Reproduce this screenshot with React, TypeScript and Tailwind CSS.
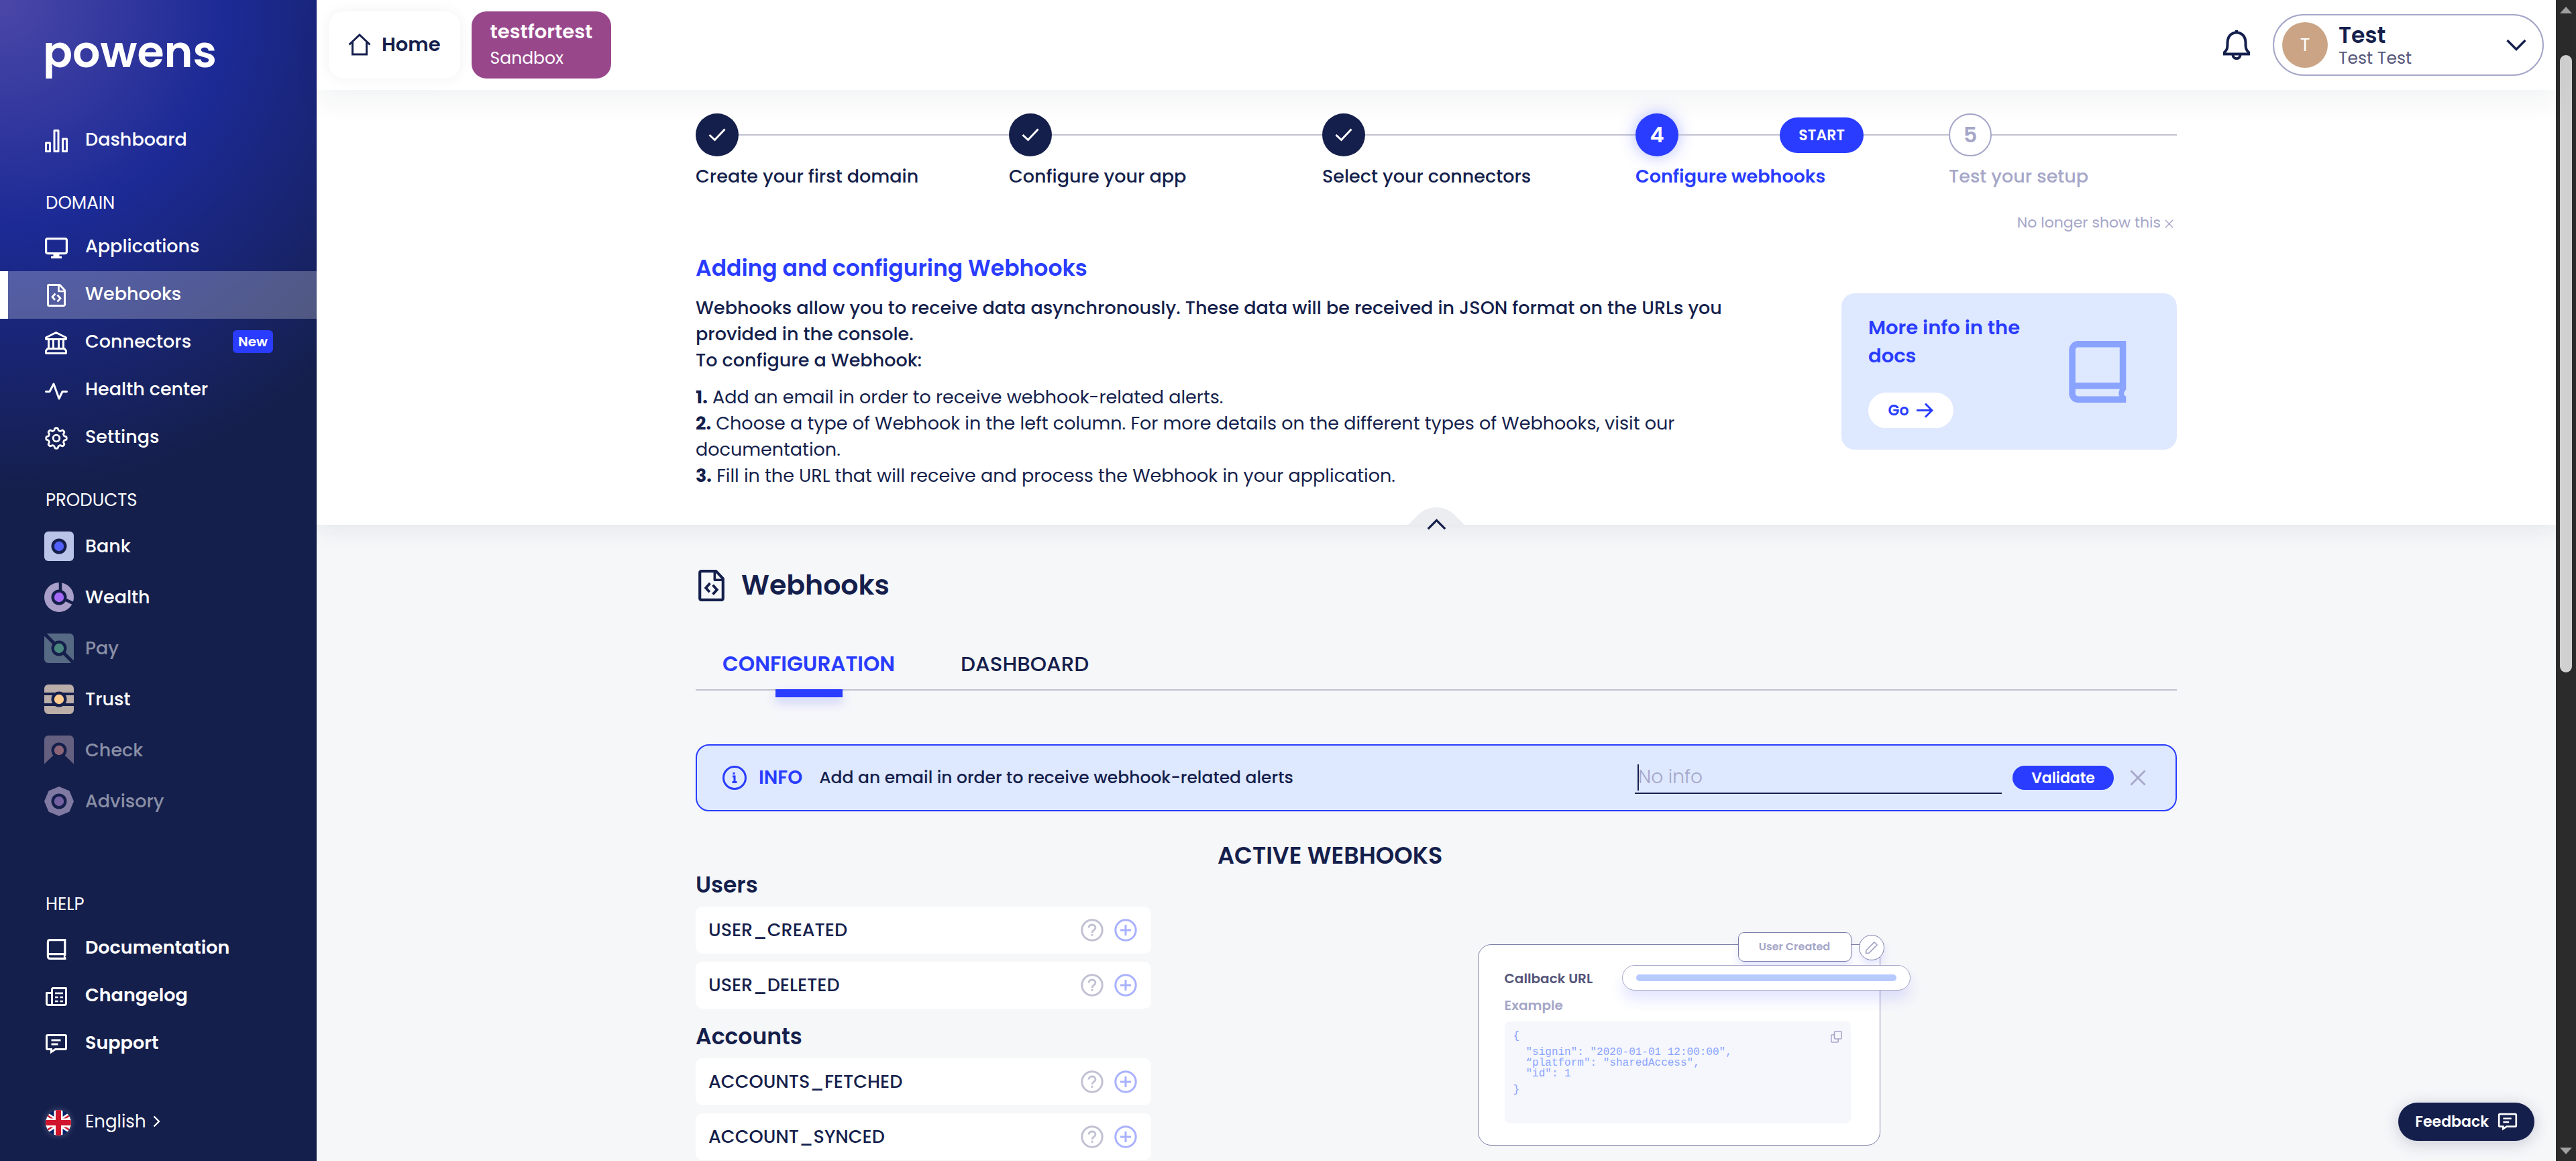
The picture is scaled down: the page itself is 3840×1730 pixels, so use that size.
import type { ReactNode } from "react";

type IconProps = { className?: string };

/* ---------- icons ---------- */

const DashboardIcon = () => (
  <svg width="34" height="34" viewBox="0 0 34 34" fill="none" stroke="currentColor" strokeWidth="3" strokeLinejoin="round">
    <rect x="1.5" y="20" width="6" height="12.5" />
    <rect x="14" y="1.5" width="6" height="31" />
    <rect x="26.5" y="14" width="6" height="18.5" />
  </svg>
);

const MonitorIcon = () => (
  <svg width="34" height="34" viewBox="0 0 34 34" fill="none" stroke="currentColor" strokeWidth="3.2">
    <rect x="1.6" y="3.6" width="30.8" height="22" rx="2.5" />
    <path d="M17 25.6v5" strokeWidth="9" />
    <path d="M9 31.5h16" />
  </svg>
);

const FileCodeIcon = ({ className = "w-[34px] h-[34px]" }: IconProps) => (
  <svg className={className} viewBox="0 0 34 34" fill="none" stroke="currentColor" strokeWidth="3" strokeLinejoin="round">
    <path d="M6 1.5H22L29.5 9.5V31a1.5 1.5 0 0 1-1.500 1.5H6A1.5 1.5 0 0 1 4.5 31V3A1.5 1.5 0 0 1 6 1.5Z" />
    <path d="M20.5 2v9h9" strokeWidth="2.6" />
    <path d="M15.5 14.5l-4.500 5 4 4.500M18.5 16.5l4.500 5-4.500 5" strokeWidth="2.8" strokeLinejoin="miter" />
  </svg>
);

const BankIcon = () => (
  <svg width="34" height="34" viewBox="0 0 34 34" fill="none" stroke="currentColor" strokeWidth="2.8" strokeLinejoin="round">
    <path d="M1.5 9 16.5 1.5 31.5 9v2.500h-30Z" />
    <path d="M5.5 11.5v13.500M12.5 11.5v13.500M20.5 11.5v13.500M27.5 11.5v13.500" strokeWidth="3" />
    <path d="M4 25.5h25l2.500 3v4h-30v-4Z" />
  </svg>
);

const PulseIcon = () => (
  <svg width="34" height="34" viewBox="0 0 34 34" fill="none" stroke="currentColor" strokeWidth="3" strokeLinejoin="round" strokeLinecap="round">
    <path d="M1.5 18.5H7l6-11.500 8 22 5-10.500h6.500" />
  </svg>
);

const gearOutline = (() => {
  const points: string[] = [];
  for (let i = 0; i < 144; i++) {
    const a = (i / 144) * Math.PI * 2;
    const r = 13.6 + 1.7 * Math.tanh(2.2 * Math.cos(8 * a));
    points.push(`${(17 + r * Math.cos(a)).toFixed(2)} ${(17 + r * Math.sin(a)).toFixed(2)}`);
  }
  return `M${points.join("L")}Z`;
})();

const GearIcon = () => (
  <svg width="34" height="34" viewBox="0 0 34 34" fill="none" stroke="currentColor" strokeWidth="2.8" strokeLinejoin="round">
    <path d={gearOutline} />
    <circle cx="17" cy="17" r="4.8" />
  </svg>
);

const BookIcon = ({ className = "w-[34px] h-[34px]" }: IconProps) => (
  <svg className={className} viewBox="0 0 34 34" fill="none" stroke="currentColor" strokeWidth="3.2">
    <path d="M31 3.6H7A3 3 0 0 0 4.4 6.5V28a3 3 0 0 0 3 3.400H31.4" />
    <path d="M29.8 2V26.5M4.4 24.6H31.4" />
    <path d="M30.5 25.5c-2 1.8-2 4 0 5.500" strokeWidth="2.6" />
  </svg>
);

const NewsIcon = () => (
  <svg width="34" height="34" viewBox="0 0 34 34" fill="none" stroke="currentColor" strokeWidth="3" strokeLinejoin="round">
    <path d="M10.5 4.5H31.5V27a2.5 2.5 0 0 1-2.500 2.500H5A2.5 2.5 0 0 1 2.5 27V11.5h8" />
    <path d="M10.5 4.5v24" />
    <path d="M15 12h12M15 18h4.500M22.5 18h4.500M15 24h4.500M22.5 24h4.500" strokeWidth="2.6" />
  </svg>
);

const ChatIcon = ({ className = "w-[34px] h-[34px]" }: IconProps) => (
  <svg className={className} viewBox="0 0 34 34" fill="none" stroke="currentColor" strokeWidth="3">
    <path d="M4 3.5H30a1.5 1.5 0 0 1 1.500 1.500V23a1.5 1.5 0 0 1-1.500 1.500H15.5L9.5 28.5v-4H4A1.5 1.5 0 0 1 2.5 23V5A1.5 1.5 0 0 1 4 3.5Z" />
    <path d="M9.5 11h14M9.5 17h10" strokeWidth="2.8" />
  </svg>
);

const HomeIcon = () => (
  <svg width="34" height="34" viewBox="0 0 34 34" fill="none" stroke="currentColor" strokeWidth="3">
    <path d="M1.5 16.5 17 2l15.500 14.500" />
    <path d="M6.5 12.5v18.500h21V12.5" />
  </svg>
);

const BellIcon = () => (
  <svg width="40" height="46" viewBox="0 0 40 46" fill="none" stroke="currentColor" strokeWidth="4">
    <path d="M2 36.5H38V34C34 30 33.5 28 33.5 20 33.5 10.5 28 4.5 20 4.5S6.5 10.5 6.5 20C6.5 28 6 30 2 34Z" />
    <path d="M20 1v4" />
    <path d="M14.5 37.5c0 7.500 11 7.500 11 0" />
  </svg>
);

const Chevron = ({ className = "", up = false }: IconProps & { up?: boolean }) => (
  <svg className={className} viewBox="0 0 30 18" fill="none" stroke="currentColor" strokeWidth="3.4">
    <path d={up ? "M1.5 16 15 2.5 28.5 16" : "M1.5 2 15 15.5 28.5 2"} />
  </svg>
);

const CrossIcon = ({ className = "" }: IconProps) => (
  <svg className={className} viewBox="0 0 24 24" fill="none" stroke="currentColor" strokeWidth="2.6">
    <path d="M1.5 1.5 22.5 22.5M22.5 1.5 1.5 22.5" />
  </svg>
);

const FlagIcon = () => (
  <svg width="38" height="38" viewBox="0 0 38 38" className="rounded-full shadow-[0_0_10px_rgba(255,255,255,0.25)]">
    <rect width="38" height="38" fill="#012169" />
    <path d="M-10 0 48 38M48 0-10 38" stroke="#fff" strokeWidth="8" />
    <path d="M-10 0 48 38M48 0-10 38" stroke="#d0142c" strokeWidth="2.5" />
    <path d="M19 0v38M0 19h38" stroke="#fff" strokeWidth="13" />
    <path d="M19 0v38M0 19h38" stroke="#d0142c" strokeWidth="8" />
  </svg>
);

const NAVY = "#151f4c";

const Core = ({ color }: { color: string }) => (
  <>
    <circle cx="22" cy="22" r="11.5" fill={NAVY} />
    <circle cx="22" cy="22" r="7.2" fill={color} />
  </>
);

const productShapes: Record<string, ReactNode> = {
  Bank: (
    <>
      <rect width="44" height="44" rx="6" fill="#bac4e8" />
      <Core color="#5260ff" />
    </>
  ),
  Wealth: (
    <>
      <circle cx="22" cy="22" r="22" fill="#a99fc9" />
      <path d="M24 0v22L46 32.5" stroke={NAVY} strokeWidth="4.5" fill="none" />
      <Core color="#a468f6" />
    </>
  ),
  Pay: (
    <>
      <rect width="44" height="44" rx="6" fill="#566a84" />
      <path d="M0 0 44 44" stroke={NAVY} strokeWidth="5" />
      <Core color="#4a877e" />
    </>
  ),
  Trust: (
    <>
      <rect width="44" height="44" rx="6" fill="#bbada8" />
      <path d="M0 14h44M0 30h44" stroke={NAVY} strokeWidth="4" />
      <Core color="#ffcb8f" />
    </>
  ),
  Check: (
    <>
      <path d="M6 0H38a6 6 0 0 1 6 6V42.5L30.5 29.5h-17L0 42.5V6A6 6 0 0 1 6 0Z" fill="#65607f" />
      <Core color="#8b6577" />
    </>
  ),
  Advisory: (
    <>
      <path d="M22 0 37.5 6.5 44 22 37.5 37.5 22 44 6.5 37.5 0 22 6.5 6.5Z" fill="#807aa3" />
      <Core color="#7561a2" />
    </>
  ),
};

/* ---------- sidebar ---------- */

const domainItems = [
  { label: "Applications", icon: <MonitorIcon /> },
  { label: "Webhooks", icon: <FileCodeIcon />, active: true },
  { label: "Connectors", icon: <BankIcon />, badge: "New" },
  { label: "Health center", icon: <PulseIcon /> },
  { label: "Settings", icon: <GearIcon /> },
];

const productItems = [
  { label: "Bank" },
  { label: "Wealth" },
  { label: "Pay", disabled: true },
  { label: "Trust" },
  { label: "Check", disabled: true },
  { label: "Advisory", disabled: true },
];

const helpItems = [
  { label: "Documentation", icon: <BookIcon /> },
  { label: "Changelog", icon: <NewsIcon /> },
  { label: "Support", icon: <ChatIcon /> },
];

type NavItemProps = { label: string; icon: ReactNode; active?: boolean; badge?: string; bold?: boolean };

const NavItem = ({ label, icon, active, badge, bold }: NavItemProps) => (
  <li>
    <a
      href="#"
      aria-current={active ? "page" : undefined}
      className={`flex h-[71px] items-center pb-[3px] text-[27px] leading-10 ${bold ? "font-semibold" : "font-medium"} ${
        active ? "border-l-[12px] border-white bg-white/25 bg-clip-padding pl-[55px]" : "pl-[67px]"
      }`}
    >
      <span className="w-[60px] pt-1">{icon}</span>
      {label}
      {badge && (
        <span className="mr-[65px] ml-auto rounded-md bg-[#293cff] px-2 text-[20px] leading-[34px] font-semibold">{badge}</span>
      )}
    </a>
  </li>
);

const NavHeading = ({ children, className = "" }: { children: ReactNode; className?: string }) => (
  <h2 className={`pl-[68px] text-[26px] leading-[62px] font-normal ${className}`}>{children}</h2>
);

const Sidebar = () => (
  <aside className="flex w-[472px] shrink-0 flex-col bg-[#151f4c] bg-[radial-gradient(circle_at_0_0,#4b47a8_0,#1c2a95_340px,#151f4c_730px)] text-white">
    <a href="#" aria-label="powens" className="mb-[46px] pt-[28px] pl-[64px] text-[65px] leading-[100px] font-semibold">
      powens
    </a>
    <nav>
      <ul>
        <NavItem label="Dashboard" icon={<DashboardIcon />} />
      </ul>
      <NavHeading className="mt-[26px]">DOMAIN</NavHeading>
      <ul>
        {domainItems.map((item) => (
          <NavItem key={item.label} {...item} />
        ))}
      </ul>
      <NavHeading className="mt-[26px]">PRODUCTS</NavHeading>
      <ul>
        {productItems.map(({ label, disabled }) => (
          <li key={label}>
            <a
              href="#"
              aria-disabled={disabled}
              className={`flex h-[76px] items-center gap-[17px] pl-[66px] text-[27px] leading-10 font-medium ${
                disabled ? "text-[#8a8fa6]" : ""
              }`}
            >
              <svg width="44" height="44" viewBox="0 0 44 44">
                {productShapes[label]}
              </svg>
              {label}
            </a>
          </li>
        ))}
      </ul>
      <NavHeading className="mt-[84px]">HELP</NavHeading>
      <ul>
        {helpItems.map((item) => (
          <NavItem key={item.label} {...item} bold />
        ))}
      </ul>
    </nav>
    <button type="button" className="mt-[44px] flex h-[71px] shrink-0 items-center pl-[68px] text-[26px] leading-10">
      <span className="w-[59px] pt-1">
        <FlagIcon />
      </span>
      English
      <svg className="ml-[10px]" width="11" height="18" viewBox="0 0 11 18" fill="none" stroke="currentColor" strokeWidth="2.4">
        <path d="M1.5 1.5 9 9l-7.500 7.500" />
      </svg>
    </button>
  </aside>
);

/* ---------- top bar ---------- */

const TopBar = () => (
  <header className="relative z-10 flex h-[134px] shrink-0 items-center bg-white px-[18px] shadow-[0_20px_36px_rgba(20,31,60,0.05)]">
    <a
      href="#"
      className="flex h-[100px] items-center gap-[16px] rounded-[22px] bg-white px-[29px] text-[29px] font-semibold shadow-[0_0_20px_rgba(20,31,76,0.06)]"
    >
      <HomeIcon />
      Home
    </a>
    <a href="#" className="ml-[17px] flex h-[100px] flex-col justify-center rounded-[22px] bg-[#98478b] px-[28px] text-white">
      <span className="text-[29px] leading-[39px] font-semibold">testfortest</span>
      <span className="text-[25px] leading-[39px]">Sandbox</span>
    </a>
    <button type="button" aria-label="Notifications" className="ml-auto">
      <BellIcon />
    </button>
    <button
      type="button"
      className="ml-[34px] flex h-[92px] w-[404px] items-center rounded-full border-2 border-[#a5a6c8] pr-[24px] pl-[12px] text-left"
    >
      <span className="flex size-[68px] items-center justify-center rounded-full bg-[#caa485] text-[27px] text-white">T</span>
      <span className="ml-[16px] flex flex-col">
        <span className="text-[33px] leading-10 font-semibold">Test</span>
        <span className="text-[25px] leading-[28px] text-[#55557a]">Test Test</span>
      </span>
      <Chevron className="ml-auto h-[18px] w-[30px]" />
    </button>
  </header>
);

/* ---------- onboarding ---------- */

const steps = [
  { label: "Create your first domain", state: "done" },
  { label: "Configure your app", state: "done" },
  { label: "Select your connectors", state: "done" },
  { label: "Configure webhooks", state: "current" },
  { label: "Test your setup", state: "todo" },
];

const circleStyles: Record<string, string> = {
  done: "bg-[#151f4c] text-white",
  current: "bg-[#293cff] text-white shadow-[0_0_24px_rgba(41,60,255,0.35)]",
  todo: "border-2 border-[#a5a6c8] bg-white text-[#a5a6c8]",
};

const labelStyles: Record<string, string> = {
  done: "font-medium",
  current: "font-semibold text-[#293cff]",
  todo: "font-medium text-[#a5a6c8]",
};

const Stepper = () => (
  <ol className="grid grid-cols-[467fr_467fr_467fr_467fr_340fr]">
    {steps.map(({ label, state }, i) => (
      <li key={label}>
        <div className="flex items-center">
          <span className={`flex size-16 items-center justify-center rounded-full text-[32px] font-semibold ${circleStyles[state]}`}>
            {state === "done" ? (
              <svg width="26" height="20" viewBox="0 0 26 20" fill="none" stroke="currentColor" strokeWidth="3">
                <path d="M1.5 10 9.5 17.5 24.5 1.5" />
              </svg>
            ) : (
              i + 1
            )}
          </span>
          <span className="h-[2px] flex-1 bg-[#c1c1d3]" />
          {state === "current" && (
            <>
              <button type="button" className="h-[53px] rounded-full bg-[#293cff] px-[28px] text-[22px] font-semibold text-white">
                START
              </button>
              <span className="h-[2px] w-[127px] bg-[#c1c1d3]" />
            </>
          )}
        </div>
        <p className={`mt-[10px] text-[27px] leading-10 ${labelStyles[state]}`}>{label}</p>
      </li>
    ))}
  </ol>
);

const Onboarding = () => (
  <section className="relative bg-white pt-[35px] pb-[54px] shadow-[0_4px_36px_rgba(20,31,60,0.09)]">
    <div className="mx-auto max-w-[2208px]">
      <Stepper />
      <div className="mt-[34px] flex justify-end pr-[5px] text-[#a5a6c8]">
        <button type="button" className="flex items-center gap-[6px] text-[22px] leading-[30px]">
          No longer show this
          <CrossIcon className="mt-[2px] size-[13px]" />
        </button>
      </div>
      <div className="mt-[29px] flex items-start justify-between">
        <div className="max-w-[1600px]">
          <h2 className="text-[33px] leading-[48px] font-semibold text-[#293cff]">Adding and configuring Webhooks</h2>
          <p className="mt-[15px] text-[27px] leading-[39px] font-medium">
            Webhooks allow you to receive data asynchronously. These data will be received in JSON format on the URLs you
            provided in the console.
            <br />
            To configure a Webhook:
          </p>
          <div className="mt-[16px] text-[27px] leading-[39px]">
            <p>
              <b className="font-bold">1.</b> Add an email in order to receive webhook-related alerts.
            </p>
            <p>
              <b className="font-bold">2.</b> Choose a type of Webhook in the left column. For more details on the different types of
              Webhooks, visit our documentation.
            </p>
            <p>
              <b className="font-bold">3.</b> Fill in the URL that will receive and process the Webhook in your application.
            </p>
          </div>
        </div>
        <div className="mt-[61px] flex w-[500px] items-center justify-between rounded-[20px] bg-[#dee8ff] pt-[30px] pr-[68px] pb-[32px] pl-[40px] text-[#293cff]">
          <div className="w-[250px]">
            <h3 className="text-[29px] leading-[42px] font-semibold">More info in the docs</h3>
            <a
              href="#"
              className="mt-[34px] flex h-[53px] w-[127px] items-center justify-center gap-[12px] rounded-full bg-white text-[22px] font-semibold"
            >
              Go
              <svg width="25" height="23" viewBox="0 0 25 23" fill="none" stroke="currentColor" strokeWidth="3">
                <path d="M0 11.5H23M13 1.5 23 11.5 13 21.5" />
              </svg>
            </a>
          </div>
          <BookIcon className="size-[101px] text-[#8aa3ff]" />
        </div>
      </div>
    </div>
    <button
      type="button"
      aria-label="Collapse"
      className="absolute -bottom-[8px] left-1/2 flex h-[34px] w-[84px] -translate-x-1/2 items-end justify-center"
    >
      <svg className="absolute top-0 left-0" width="84" height="26" viewBox="0 0 84 26" fill="#ecedf1">
        <path d="M0 26 12 14Q25 0 42 0T72 14L84 26Z" />
      </svg>
      <Chevron up className="relative h-[17px] w-[29px]" />
    </button>
  </section>
);

/* ---------- webhooks ---------- */

const groups = [
  { title: "Users", hooks: ["USER_CREATED", "USER_DELETED"] },
  { title: "Accounts", hooks: ["ACCOUNTS_FETCHED", "ACCOUNT_SYNCED"] },
];

const HookRow = ({ name }: { name: string }) => (
  <li className="flex h-[70px] items-center rounded-[10px] bg-white pr-[21px] pl-[19px]">
    <span className="flex-1 text-[27px] leading-10 font-medium">{name}</span>
    <button type="button" aria-label={`About ${name}`} className="text-[#c1c1d3]">
      <svg width="34" height="34" viewBox="0 0 34 34" fill="none" stroke="currentColor" strokeWidth="3">
        <circle cx="17" cy="17" r="15.2" />
        <path d="M12 13.5c0-6 10-6 10 0 0 3.500-5 3.500-5 7.500" strokeWidth="2.8" />
        <path d="M17 22.8v3" strokeWidth="2.8" />
      </svg>
    </button>
    <button type="button" aria-label={`Add ${name}`} className="ml-[16px] text-[#a9b1ff]">
      <svg width="34" height="34" viewBox="0 0 34 34" fill="none" stroke="currentColor" strokeWidth="3">
        <circle cx="17" cy="17" r="15.2" />
        <path d="M17 9v16M9 17h16" />
      </svg>
    </button>
  </li>
);

const Preview = () => (
  <div className="relative h-[318px] w-[655px] pt-[18px]">
    <div className="flex h-[300px] w-[600px] flex-col rounded-[20px] border border-[#7d7fa8] bg-white pt-[35px] pr-[43px] pl-[39px]">
      <p className="text-[20px] leading-[30px] font-semibold text-[#55557a]">Callback URL</p>
      <p className="mt-[10px] text-[20px] leading-[30px] font-semibold text-[#a5a6c8]">Example</p>
      <div className="mt-[9px] flex h-[152px] justify-between rounded-[8px] bg-[#f5f7fd] px-[13px] pt-[14px]">
        <pre className="font-['Liberation_Mono',monospace] text-[16px] leading-[16px] text-[#8aa3ff]">
          <span className="block">{"{"}</span>
          <span className="mt-[8px] mb-[8px] ml-[19px] block">{'"signin": "2020-01-01 12:00:00",\n“platform": "sharedAccess",\n"id": 1'}</span>
          <span className="block">{"}"}</span>
        </pre>
        <svg width="17" height="18" viewBox="0 0 17 18" fill="none" stroke="#a5a6c8" strokeWidth="1.6">
          <rect x="5.5" y="1" width="10.5" height="11" rx="1" />
          <path d="M5.5 6H1.8a1 1 0 0 0-1 1v9a1 1 0 0 0 1 1h8.400a1 1 0 0 0 1-1v-4" />
        </svg>
      </div>
    </div>
    <span className="absolute top-0 right-[98px] flex h-[44px] w-[169px] items-center justify-center rounded-[9px] border border-[#7d7fa8] bg-white text-[16px] font-semibold text-[#a5a6c8] shadow-[0_8px_12px_rgba(41,60,255,0.12)]">
      User Created
    </span>
    <span className="absolute top-[4px] right-[49px] flex size-[38px] items-center justify-center rounded-full border border-[#7d7fa8] bg-white shadow-[0_8px_12px_rgba(41,60,255,0.12)]">
      <svg width="20" height="20" viewBox="0 0 20 20" fill="none" stroke="#a5a6c8" strokeWidth="1.7" strokeLinejoin="round">
        <path d="M1.5 18.5 2 14 14 1.8 18.2 6 6 18.2Z" />
      </svg>
    </span>
    <span className="absolute top-[49px] right-[10px] flex h-[38px] w-[430px] items-center rounded-full border border-[#a5a6c8] bg-white px-[20px] shadow-[0_14px_20px_rgba(41,60,255,0.12)]">
      <span className="h-[10px] flex-1 rounded-full bg-[#b7caff]" />
    </span>
  </div>
);

const Webhooks = () => (
  <section className="mx-auto w-full max-w-[2208px] pt-[60px]">
    <h1 className="flex h-[60px] items-center text-[41px] font-semibold">
      <FileCodeIcon className="mr-[21px] size-[47px]" />
      Webhooks
    </h1>
    <div role="tablist" className="mt-[65px] flex gap-[98px] border-b-2 border-[#c1c1d3] pl-[40px] text-[31px] leading-[44px]">
      <button type="button" role="tab" aria-selected="true" className="relative pb-[16px] font-semibold text-[#293cff]">
        CONFIGURATION
        <span className="absolute top-full left-1/2 h-[12px] w-[100px] -translate-x-1/2 bg-[#293cff] shadow-[0_8px_16px_rgba(41,60,255,0.22)]" />
      </button>
      <button type="button" role="tab" aria-selected="false" className="pb-[16px] font-medium">
        DASHBOARD
      </button>
    </div>
    <div className="mt-[80px] flex h-[100px] items-center rounded-[20px] border-2 border-[#293cff] bg-[#dee8ff] pr-[44px] pl-[38px]">
      <svg width="36" height="36" viewBox="0 0 36 36" fill="none" stroke="#293cff" strokeWidth="3">
        <circle cx="18" cy="18" r="16.5" />
        <path d="M15 16h3v8M14.5 24.5h7M17 10v3.200" />
      </svg>
      <b className="ml-[18px] text-[28px] leading-10 font-semibold text-[#293cff]">INFO</b>
      <label htmlFor="alert-email" className="ml-[25px] text-[25px] leading-10 font-medium">
        Add an email in order to receive webhook-related alerts
      </label>
      <span className="relative ml-auto w-[547px]">
        <input
          id="alert-email"
          type="email"
          placeholder="No info"
          className="block h-[48px] w-full border-b-2 border-[#151f4c] bg-transparent pl-[5px] text-[28px] font-light outline-none placeholder:text-[#a5a6c8]"
        />
        <span className="absolute top-[4px] left-[4px] h-[39px] w-[2px] bg-[#151f4c]" />
      </span>
      <button type="button" className="ml-[16px] h-[36px] w-[151px] rounded-full bg-[#293cff] text-[22px] font-semibold text-white">
        Validate
      </button>
      <button type="button" aria-label="Dismiss" className="ml-[24px] text-[#a5a6c8]">
        <CrossIcon className="size-[24px]" />
      </button>
    </div>
    <div className="mt-[44px] grid grid-cols-[679px_1fr] gap-x-[99px]">
      <h2 className="col-start-2 text-[35px] leading-[44px] font-semibold">ACTIVE WEBHOOKS</h2>
      <div className="col-start-1 flex flex-col gap-[20px]">
        {groups.map(({ title, hooks }) => (
          <div key={title}>
            <h3 className="text-[33px] leading-[44px] font-semibold">{title}</h3>
            <ul className="mt-[10px] flex flex-col gap-[12px]">
              {hooks.map((name) => (
                <HookRow key={name} name={name} />
              ))}
            </ul>
          </div>
        ))}
      </div>
      <div className="flex justify-center pt-[92px]">
        <Preview />
      </div>
    </div>
  </section>
);

const ScrollTrack = () => (
  <div aria-hidden="true" className="flex w-[30px] shrink-0 flex-col items-center bg-[#2b2b2b] py-[10px]">
    <svg width="18" height="10" viewBox="0 0 18 10" fill="#a0a0a0">
      <path d="M9 0 18 10H0Z" />
    </svg>
    <div className="flex w-[18px] flex-1 flex-col pt-[62px] pb-[14px]">
      <div className="h-[57%] rounded-full bg-[#d0d0d0]" />
    </div>
    <svg width="18" height="10" viewBox="0 0 18 10" fill="#a0a0a0">
      <path d="M0 0H18L9 10Z" />
    </svg>
  </div>
);

export default function App() {
  return (
    <div className="flex h-screen overflow-hidden bg-[#f6f7f9] font-['Poppins','Inter',sans-serif] text-[#151f4c]">
      <Sidebar />
      <div className="relative flex min-w-0 flex-1 flex-col">
        <TopBar />
        <main className="min-h-0 flex-1 overflow-hidden">
          <Onboarding />
          <Webhooks />
        </main>
        <button
          type="button"
          className="absolute right-[32px] bottom-[30px] flex h-[57px] items-center gap-[13px] rounded-full bg-[#151f4c] px-[25px] text-[22px] font-semibold text-white shadow-[0_4px_24px_rgba(20,31,76,0.2)]"
        >
          Feedback
          <ChatIcon className="size-[30px]" />
        </button>
      </div>
      <ScrollTrack />
    </div>
  );
}
